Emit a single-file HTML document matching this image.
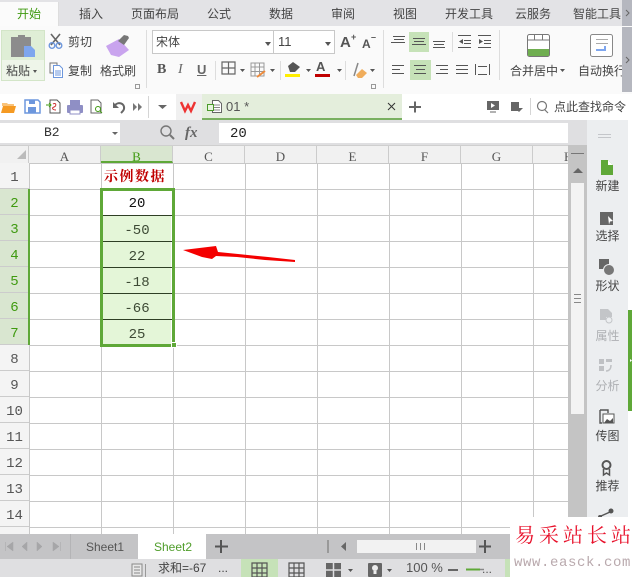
<!DOCTYPE html>
<html lang="zh"><head><meta charset="utf-8"><title>WPS</title>
<style>
*{box-sizing:border-box}
html,body{margin:0;padding:0}
body{width:632px;height:577px;overflow:hidden;position:relative;background:#fff;font-family:"Liberation Sans","Noto Sans CJK SC",sans-serif;font-size:12px;color:#444}
.a{position:absolute}
.t{position:absolute;line-height:16px;white-space:nowrap}
.n{font-family:"Liberation Mono","Noto Sans CJK SC",monospace;font-size:14px;color:#555}
svg{position:absolute;overflow:visible}
.ch{position:absolute;top:146px;height:17px;line-height:21px;width:72px;text-align:center;font-family:"Liberation Serif",serif;font-size:13px;color:#555;background:#f1f1f1;border-right:1px solid #ccc;overflow:hidden}
.rh{position:absolute;left:0;width:29px;height:26px;line-height:30px;text-align:center;font-family:"Liberation Mono",monospace;font-size:14px;color:#555;background:#f4f4f4;border-bottom:1px solid #ccc;overflow:hidden}
.g{color:#3f9a10;background:#d9e6d0}
.v{position:absolute;left:103px;width:68px;height:26px;line-height:26px;text-align:center;font-family:"Liberation Mono",monospace;font-size:14px;color:#3d4a35}
.sb{position:absolute;left:587px;width:41px;text-align:center;font-size:12px;line-height:16px;color:#444}
</style></head><body>

<!-- tabs -->
<div class="a" style="left:0;top:0;width:632px;height:26px;background:#e3e3e6"></div>
<div class="a" style="left:0;top:2px;width:59px;height:25px;background:#fbfbfb;border-right:1px solid #ddd"></div>
<span class="t" style="left:17px;top:6px;color:#3f9a10">开始</span>
<span class="t" style="left:79px;top:6px">插入</span>
<span class="t" style="left:131px;top:6px">页面布局</span>
<span class="t" style="left:207px;top:6px">公式</span>
<span class="t" style="left:269px;top:6px">数据</span>
<span class="t" style="left:331px;top:6px">审阅</span>
<span class="t" style="left:393px;top:6px">视图</span>
<span class="t" style="left:445px;top:6px">开发工具</span>
<span class="t" style="left:515px;top:6px">云服务</span>
<span class="t" style="left:573px;top:6px">智能工具</span>

<!-- ribbon -->
<div class="a" style="left:0;top:26px;width:632px;height:68px;background:#fafafa"></div>
<span class="t" style="left:68px;top:34px">剪切</span>
<span class="t" style="left:68px;top:63px">复制</span>
<span class="t" style="left:100px;top:63px">格式刷</span>
<span class="t" style="left:510px;top:63px">合并居中</span>
<span class="t" style="left:578px;top:63px">自动换行</span>
<div class="a" style="left:622px;top:0;width:10px;height:26px;background:#b5b7bf"></div>
<div class="a" style="left:622px;top:27px;width:10px;height:65px;background:#b5b7bf"></div>
<svg style="left:0;top:0" width="632" height="145" viewBox="0 0 632 145">
<path d="M626 10l3 3-3 3M626 57l3 3-3 3" fill="none" stroke="#666"/>
<!-- paste -->
<rect x="1.500" y="30.500" width="43" height="50" fill="#eef5e9" stroke="#d3e5c8"/>
<rect x="2" y="31" width="42" height="29" fill="#dfeed6"/>
<path d="M11 37h7v-2h7v2h6v20H11z" fill="#8c8c8c"/>
<path d="M24 46h7l4 4v7H24z" fill="#7ea6ee"/>
<path d="M33 70l4 0-2 3z" fill="#555"/>
<!-- scissors -->
<path d="M51 34l9 11M60 34l-9 11" stroke="#666" stroke-width="1.600"/>
<circle cx="52" cy="45.500" r="2.800" fill="none" stroke="#6d97dd" stroke-width="1.400"/>
<circle cx="59" cy="45.500" r="2.800" fill="none" stroke="#6d97dd" stroke-width="1.400"/>
<!-- copy -->
<path d="M53 73h-3V63h7v2" fill="none" stroke="#777"/>
<path d="M53.500 65.500h6l3 3v9h-9z" fill="#fff" stroke="#6d97dd"/>
<path d="M55 71h6M55 73h6M55 75h6" stroke="#6d97dd"/>
<!-- format brush -->
<path d="M106 46l13-7 10 11-10 7-8-2z" fill="#c9a4ee"/>
<path d="M118 41l6-6 4 1 1 2 -5 7z" fill="#777"/>
<path d="M135.500 84.500h4v4h-4z" fill="none" stroke="#999"/>
<path d="M146.500 30v58" stroke="#ddd"/>
<!-- font combos -->
<rect x="152.500" y="30.500" width="182" height="23" fill="#fff" stroke="#c8c8c8"/>
<path d="M273.500 31v22" stroke="#c8c8c8"/>
<path d="M265 42l6 0-3 4zM325 42l6 0-3 4z" fill="#555"/>
<path d="M215.500 61v19" stroke="#ddd"/>
<path d="M222 62h13v12h-13zM228.500 62v12M222 68h13" fill="none" stroke="#666" stroke-width="1.200"/>
<path d="M240 69h5l-2.500 3zM270 69h5l-2.500 3zM306 69h5l-2.500 3z" fill="#555"/>
<path d="M251 63h13v13h-13zM255 63v13M259.500 63v13M251 67h13M251 71.500h13" fill="none" stroke="#999"/>
<path d="M257 77l8-6" stroke="#ee8a3a" stroke-width="2"/>
<path d="M280.500 61v19" stroke="#ddd"/>
<path d="M288 66l5-4 7 5-5 5h-5z" fill="#555"/>
<rect x="285" y="74" width="15" height="3" fill="#ffee00"/>
<rect x="315" y="74" width="15" height="3" fill="#c00000"/>
<path d="M337 69h5l-2.500 3zM370 69h5l-2.500 3z" fill="#555"/>
<path d="M345.500 61v19" stroke="#ddd"/>
<path d="M354 76l4-13" stroke="#888" stroke-width="1.500"/>
<path d="M356 75l6-6 5 4-5 5h-4z" fill="#f0ad5c"/>
<path d="M371.500 84.500h4v4h-4z" fill="none" stroke="#999"/>
<path d="M383.500 30v58" stroke="#ddd"/>
<!-- alignment -->
<rect x="409" y="32" width="20" height="20" fill="#c6e2b8"/>
<rect x="410" y="60" width="21" height="20" fill="#c6e2b8"/>
<g stroke="#555" fill="none">
<path d="M393 36.500h12M394 39.500h10M391 42.500h14"/>
<path d="M413 38.500h12M414 41.500h10M412 44.500h14"/>
<path d="M433 41.500h12M434 44.500h10M433 47.500h12"/>
<path d="M458 35.500h13M464 40.500h7M464 43.500h7M458 47.500h13"/>
<path d="M478 35.500h13M484 40.500h7M484 43.500h7M478 47.500h13"/>
<path d="M392 65.500h12M392 69.500h8M392 73.500h12"/>
<path d="M414 65.500h12M416 69.500h9M414 73.500h12"/>
<path d="M436 65.500h12M440 69.500h8M436 73.500h12"/>
<path d="M456 65.500h12M456 69.500h12M456 73.500h12"/>
<path d="M475.500 64v11M489.500 64v11M478 66.500h9M478 74.500h9"/>
</g>
<path d="M452.500 32v20" stroke="#ddd"/>
<path d="M459 41.500l4-2.500v5zM483 41.500l-4-2.500v5z" fill="#555"/>
<path d="M499.500 30v50" stroke="#ddd"/>
<!-- merge -->
<rect x="527.500" y="34.500" width="22" height="22" rx="2" fill="#fff" stroke="#777"/>
<rect x="528" y="49" width="21" height="7" fill="#6fae50"/>
<path d="M528 40h21M534.500 35v5M542.500 35v5" stroke="#777"/>
<path d="M560 69h5l-2.500 3z" fill="#555"/>
<rect x="590.500" y="34.500" width="22" height="22" rx="2" fill="#fff" stroke="#888"/>
<path d="M596 39.500h12M596 43.500h12" stroke="#aaa"/>
<path d="M596 50h9v-4" fill="none" stroke="#7ea6ee" stroke-width="2"/>
<!-- quick bar -->
<path d="M1 113l2-7h13l-2 7z" fill="#f59a23"/><path d="M2 106v-3h5l1 1h6v2z" fill="#f9c37a"/>
<path d="M25 100h13l2 2v11H25z" fill="#fff" stroke="#6d97dd" stroke-width="1.500"/><rect x="28" y="107" width="8" height="6" fill="#6d97dd"/><rect x="29" y="100" width="6" height="4" fill="#6d97dd"/>
<path d="M50 100h7l3 3v10H50z" fill="#fff" stroke="#555"/><path d="M46 105h5M49 103l2 2-2 2" stroke="#3f9a10" fill="none"/><path d="M53 104c3-2 4 2 1 3s-1 3 2 3" stroke="#c33" fill="none"/>
<rect x="67" y="105" width="16" height="8" rx="1" fill="#8f8fc5"/><rect x="70" y="100" width="10" height="5" fill="#8f8fc5"/><rect x="70" y="110" width="10" height="4" fill="#fff" stroke="#8f8fc5"/>
<path d="M91 100h7l3 3v10H91z" fill="#fff" stroke="#666"/><circle cx="98" cy="109" r="2.500" fill="#fff" stroke="#3f9a10"/><path d="M100 111l2 2" stroke="#3f9a10"/>
<path d="M114 106c4-5 11-3 10 3-.5 2-2 3-3 4" fill="none" stroke="#666" stroke-width="2"/><path d="M113 102v6h6z" fill="#666"/>
<path d="M133 103l4 4-4 4zM138 103l4 4-4 4z" fill="#777"/>
<path d="M148.500 96v22" stroke="#d5d5d5"/>
<path d="M158 105h9l-4.500 4z" fill="#666"/>
<rect x="176" y="94" width="26" height="26" fill="#f0f0f0"/>
<path d="M181 102l4 9 3-6 3 6 4-9" fill="none" stroke="#ee3333" stroke-width="2.400"/>
<rect x="202" y="94" width="200" height="26" fill="#e4eedc"/>
<rect x="202" y="118" width="200" height="2" fill="#79b060"/>
<path d="M212.500 100.500h6l3 3v9h-9z" fill="#fff" stroke="#666"/><path d="M214 105h6M214 107.500h6M214 110h6" stroke="#888"/><rect x="207.500" y="104.500" width="6" height="6" fill="#e8f5df" stroke="#4a9a2a"/>
<path d="M388 103l7 7M395 103l-7 7" stroke="#333"/>
<path d="M415 101.500v11M409 107h12" stroke="#666" stroke-width="2"/>
<rect x="487" y="101" width="12" height="9" fill="#666"/><path d="M491 103l4 2.500-4 2.500z" fill="#fff"/><path d="M490 112h6" stroke="#666"/>
<rect x="511" y="102" width="8" height="9" fill="#666"/><path d="M515 108h8l-4 4z" fill="#666"/>
<path d="M530.500 98v17" stroke="#d5d5d5"/>
<circle cx="542" cy="106" r="4.500" fill="none" stroke="#777" stroke-width="1.200"/><path d="M545 110l3 3" stroke="#777" stroke-width="1.200"/>
</svg>
<span class="t" style="left:6px;top:63px">粘贴</span>
<span class="t" style="left:156px;top:34px;font-size:12px;color:#444">宋体</span>
<span class="t" style="left:278px;top:34px;font-size:13px">11</span>
<span class="t" style="left:340px;top:35px;font-size:15px;font-weight:bold;color:#555">A</span>
<span class="t" style="left:351px;top:29px;font-size:9px;font-weight:bold;color:#555">+</span>
<span class="t" style="left:362px;top:36px;font-size:12px;font-weight:bold;color:#555">A</span>
<span class="t" style="left:371px;top:29px;font-size:9px;font-weight:bold;color:#555">–</span>
<span class="t" style="left:157px;top:62px;font-size:14px;font-weight:bold;font-family:'Liberation Serif',serif;color:#555">B</span>
<span class="t" style="left:178px;top:62px;font-size:14px;font-style:italic;font-family:'Liberation Serif',serif;color:#666">I</span>
<span class="t" style="left:197px;top:62px;font-size:13px;text-decoration:underline;font-weight:bold;color:#666">U</span>
<span class="t" style="left:316px;top:59px;font-size:13px;font-weight:bold;color:#555">A</span>

<!-- quick bar -->
<span class="t" style="left:226px;top:99px;font-size:13px;color:#555">01 *</span>
<span class="t" style="left:554px;top:99px;">点此查找命令</span>

<!-- formula bar -->
<div class="a" style="left:0;top:120px;width:587px;height:25px;background:#dfdfe1"></div>
<div class="a" style="left:0;top:123px;width:120px;height:20px;background:#fff"></div>
<span class="t n" style="left:44px;top:125px;font-size:13px;color:#333">B2</span>
<div class="a" style="left:219px;top:123px;width:349px;height:20px;background:#fff"></div>
<span class="t n" style="left:230px;top:126px;color:#222">20</span>
<span class="t" style="left:185px;top:125px;font:italic bold 15px 'Liberation Serif',serif;color:#666">fx</span>
<svg style="left:0;top:0" width="232" height="145"><path d="M112 132h6l-3 3z" fill="#666"/><circle cx="166" cy="131" r="5" fill="none" stroke="#777" stroke-width="1.400"/><path d="M170 135l4 4" stroke="#777" stroke-width="2"/></svg>

<!-- grid -->
<div class="a" style="left:0;top:145px;width:568px;height:1px;background:#cfcfcf"></div>
<div class="a" style="left:29px;top:163px;width:539px;height:371px;background-color:#fff;background-image:linear-gradient(to right,#c8c8c8 1px,transparent 1px),linear-gradient(to bottom,#c8c8c8 1px,transparent 1px);background-size:72px 26px"></div>
<div class="a" style="left:0;top:146px;width:29px;height:17px;background:#f1f1f1;border-right:1px solid #ccc"></div>
<svg style="left:0;top:146px" width="29" height="17"><path d="M17 13l9-9v9z" fill="#bbb"/></svg>
<div class="ch" style="left:29px">A</div>
<div class="ch" style="left:101px;background:#d9e6d0;color:#3f9a10;border-bottom:2px solid #5fa838">B</div>
<div class="ch" style="left:173px">C</div>
<div class="ch" style="left:245px">D</div>
<div class="ch" style="left:317px">E</div>
<div class="ch" style="left:389px">F</div>
<div class="ch" style="left:461px">G</div>
<div class="ch" style="left:533px;width:35px;border-right:0;text-align:left;padding-left:31px">H</div>
<div class="a" style="left:0;top:163px;width:568px;height:1px;background:#c8c8c8"></div>

<div class="rh" style="top:163px">1</div>
<div class="rh g" style="top:189px">2</div>
<div class="rh g" style="top:215px">3</div>
<div class="rh g" style="top:241px">4</div>
<div class="rh g" style="top:267px">5</div>
<div class="rh g" style="top:293px">6</div>
<div class="rh g" style="top:319px">7</div>
<div class="rh" style="top:345px">8</div>
<div class="rh" style="top:371px">9</div>
<div class="rh" style="top:397px">10</div>
<div class="rh" style="top:423px">11</div>
<div class="rh" style="top:449px">12</div>
<div class="rh" style="top:475px">13</div>
<div class="rh" style="top:501px">14</div>
<div class="a" style="left:0;top:527px;width:29px;height:7px;background:#f4f4f4"></div>
<div class="a" style="left:28px;top:189px;width:2px;height:156px;background:#5fa838"></div>

<!-- selection -->
<div class="a" style="left:103px;top:215px;width:68px;height:130px;background:#e4f6d8"></div>
<div class="a" style="left:103px;top:215px;width:69px;height:1px;background:#2f3f25"></div>
<div class="a" style="left:103px;top:241px;width:69px;height:1px;background:#2f3f25"></div>
<div class="a" style="left:103px;top:267px;width:69px;height:1px;background:#2f3f25"></div>
<div class="a" style="left:103px;top:293px;width:69px;height:1px;background:#2f3f25"></div>
<div class="a" style="left:103px;top:319px;width:69px;height:1px;background:#2f3f25"></div>
<div class="a" style="left:100px;top:188px;width:75px;height:159px;border:3px solid #5fa838"></div>
<div class="a" style="left:171px;top:342px;width:6px;height:6px;background:#5fa838;border:1px solid #fff"></div>
<span class="t" style="left:104px;top:170px;font-family:'Liberation Serif','Noto Serif CJK SC',serif;font-weight:bold;font-size:14px;letter-spacing:1.500px;color:#c00000">示例数据</span>
<div class="v" style="top:191px;color:#111">20</div>
<div class="v" style="top:218px">-50</div>
<div class="v" style="top:244px">22</div>
<div class="v" style="top:270px">-18</div>
<div class="v" style="top:296px">-66</div>
<div class="v" style="top:322px">25</div>

<svg style="left:0;top:0" width="632" height="577"><path d="M183 250l33-4 2 6 20 2 30 3 27 3v2l-30-2-28-3-21-1-4 3-10-2z" fill="#f40000"/></svg>

<!-- scrollbar -->
<div class="a" style="left:568px;top:145px;width:19px;height:389px;background:#c4c4c4"></div>
<div class="a" style="left:571px;top:183px;width:13px;height:231px;background:#f3f3f3"></div>
<svg style="left:560px;top:130px" width="72" height="200"><path d="M11 23.500h13" stroke="#777"/><path d="M13 43l5-5 5 5z" fill="#666"/><path d="M14 164.500h7M14 168.500h7M14 172.500h7" stroke="#888"/></svg>

<!-- side panel -->
<div class="a" style="left:587px;top:120px;width:41px;height:414px;background:#eceef0"></div>
<div class="a" style="left:628px;top:120px;width:4px;height:414px;background:#fff"></div>
<div class="a" style="left:628px;top:310px;width:4px;height:101px;background:#5fa838"></div>
<svg style="left:0;top:0" width="632" height="534">
<path d="M598 134.500h13M598 137.500h13" stroke="#c4c6ca"/>
<path d="M601 160h7l5 5v10h-12z" fill="#5fa838"/><path d="M608 160l5 5h-5z" fill="#fff"/>
<path d="M600 212h13v13h-13z" fill="#666"/><path d="M608 216l5 5-3 .5-1 3z" fill="#fff"/>
<rect x="599" y="259" width="10" height="10" fill="#666"/><circle cx="609" cy="270" r="5.500" fill="#777" stroke="#eceef0"/>
<path d="M600 309h8l4 4v4h-12z M600 317h6v3h-6z" fill="#c3c5c8"/><circle cx="609" cy="320" r="3" fill="none" stroke="#c3c5c8"/>
<path d="M599 359h5v5h-5zM599 366h5v5h-5zM606 359h6v3h-6z" fill="#bfc1c4"/><path d="M611 365c0 4-2 6-5 6" fill="none" stroke="#bfc1c4" stroke-width="1.500"/>
<path d="M600 410v13h2M600 410h8v3" fill="none" stroke="#555" stroke-width="1.400"/><rect x="603" y="414" width="11" height="9" fill="#fff" stroke="#555"/><path d="M604 423l3-4 3 2 3-3v5z" fill="#555"/>
<circle cx="606.500" cy="465" r="4" fill="none" stroke="#555" stroke-width="2"/><path d="M603.500 469v6l3-2 3 2v-6" fill="none" stroke="#555" stroke-width="1.500"/>
<path d="M601 516l9-4" stroke="#555" stroke-width="1.500"/><circle cx="600" cy="517" r="2" fill="#555"/><circle cx="611" cy="511" r="2.500" fill="#555"/>
<path d="M630 359l2 1.500-2 1.500z" fill="#fff"/>
</svg>
<div class="sb" style="top:178px">新建</div>
<div class="sb" style="top:228px">选择</div>
<div class="sb" style="top:278px">形状</div>
<div class="sb" style="top:328px;color:#aeb0b3">属性</div>
<div class="sb" style="top:378px;color:#aeb0b3">分析</div>
<div class="sb" style="top:428px">传图</div>
<div class="sb" style="top:478px">推荐</div>

<!-- sheet tabs -->
<div class="a" style="left:0;top:534px;width:632px;height:25px;background:#c4c4c6"></div>
<div class="a" style="left:138px;top:534px;width:68px;height:25px;background:#fff"></div>
<span class="t" style="left:86px;top:539px;color:#555">Sheet1</span>
<span class="t" style="left:154px;top:539px;color:#4f9d2a">Sheet2</span>
<svg style="left:0;top:534px" width="632" height="25">
<path d="M5.500 8v9M13 8l-6 4.500 6 4.500zM27 8l-5 4.500 5 4.500zM37 8l5 4.500-5 4.500zM53 8l6 4.500-6 4.500zM60.500 8v9" fill="#a6a6a8" stroke="#a6a6a8" stroke-width=".5"/>
<path d="M70.500 0v25" stroke="#b4b4b6"/>
<path d="M221 6v13M215 12.500h13" stroke="#555" stroke-width="2"/>
<path d="M328 6v13" stroke="#999" stroke-width="2"/>
<path d="M346 8l-5 4.500 5 4.500z" fill="#666"/>
<rect x="357" y="6" width="119" height="13" fill="#f2f2f2"/>
<path d="M416.500 9v7M420.500 9v7M424.500 9v7" stroke="#888"/>
<path d="M485 6v13M479 12.500h12" stroke="#555" stroke-width="2"/>
</svg>

<!-- status -->
<div class="a" style="left:0;top:559px;width:632px;height:18px;background:#dfdfe1"></div>
<div class="a" style="left:241px;top:559px;width:37px;height:18px;background:#c6e2b8"></div>
<span class="t" style="left:158px;top:560px;color:#444">求和=-67</span>
<span class="t" style="left:218px;top:560px;color:#444">...</span>
<span class="t" style="left:406px;top:560px;font-size:13px;color:#555">100 %</span>
<svg style="left:0;top:559px" width="632" height="18">
<path d="M132 5h10v12h-10zM134 8h6M134 11h6M134 14h6" fill="#e8e8e8" stroke="#888"/><path d="M145.500 5v13" stroke="#999"/>
<path d="M252 4h15v14h-15zM252 9h15M252 14h15M257 4v14M262 4v14" fill="none" stroke="#555" stroke-width="1.200"/>
<path d="M289 4h15v14h-15zM289 9h15M289 14h15M294 4v14M299 4v14" fill="none" stroke="#555" stroke-width="1.200"/>
<rect x="326" y="4" width="15" height="14" fill="#666"/><path d="M333.500 4v14M326 11h15" stroke="#dfdfe1" stroke-width="1.500"/>
<path d="M348 10h5l-2.500 3zM387 10h5l-2.500 3z" fill="#555"/>
<rect x="368" y="4" width="14" height="14" rx="1" fill="#666"/><circle cx="375" cy="9" r="3" fill="#eee"/><rect x="373.500" y="12" width="3" height="3" fill="#eee"/>
<path d="M448 11h10" stroke="#666" stroke-width="2"/>
<path d="M466 10.500h14" stroke="#5fa838" stroke-width="2"/><path d="M480 10.500h4" stroke="#888" stroke-width="1.500"/>
</svg>
<span class="t" style="left:482px;top:561px;color:#555">...</span>
<div class="a" style="left:505px;top:559px;width:7px;height:18px;background:#c6e2b8"></div>

<!-- watermark -->
<div class="a" style="left:510px;top:522px;width:122px;height:55px;background:#fff"></div>
<div class="a" style="left:530px;top:517px;width:102px;height:6px;background:#fff"></div>
<span class="t" style="left:515px;top:524px;font-family:'Liberation Serif','Noto Serif CJK SC',serif;font-size:20px;line-height:24px;letter-spacing:4px;color:#e8102a">易采站长站</span>
<span class="t" style="left:514px;top:555px;font-family:'Liberation Mono',monospace;font-size:14px;line-height:16px;letter-spacing:.6px;color:#b9a9ad">www.easck.com</span>
</body></html>
